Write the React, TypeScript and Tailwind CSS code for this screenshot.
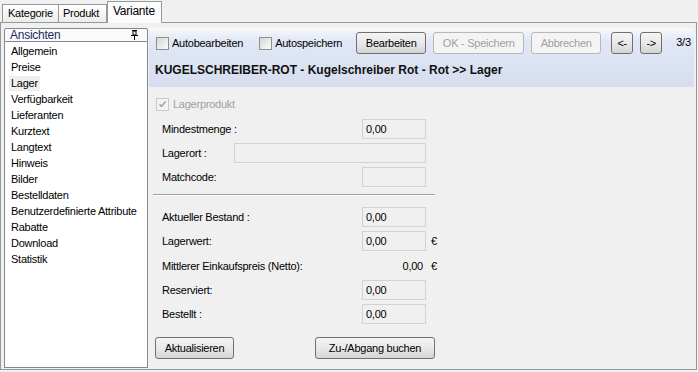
const views = [
  "Allgemein",
  "Preise",
  "Lager",
  "Verfügbarkeit",
  "Lieferanten",
  "Kurztext",
  "Langtext",
  "Hinweis",
  "Bilder",
  "Bestelldaten",
  "Benutzerdefinierte Attribute",
  "Rabatte",
  "Download",
  "Statistik",
];

function CheckBox({ disabled, checked }: { disabled?: boolean; checked?: boolean }) {
  return (
    <span
      className={
        "relative flex w-[13px] h-[13px] shrink-0 border " +
        (disabled
          ? "border-[#c9c9c9] bg-[#f4f4f4]"
          : "border-[#8f8f8f] bg-gradient-to-br from-[#d6d6d6] to-[#fcfcfc]")
      }
    >
      {checked && (
        <svg width="11" height="11" viewBox="0 0 11 11" className="absolute left-0 top-0">
          <path d="M2.5 5.2 L4.5 7.4 L8.6 2.6" fill="none" stroke="#a3a3a3" strokeWidth="1.6" />
        </svg>
      )}
    </span>
  );
}

function Btn({ label, w, disabled }: { label: string; w: string; disabled?: boolean }) {
  return (
    <div
      className={
        "h-[22px] flex items-center justify-center rounded-[3px] border shrink-0 " +
        w +
        " " +
        (disabled
          ? "border-[#b5b9bc] bg-[#f4f4f4] text-[#a0a0a0]"
          : "border-[#707070] bg-gradient-to-b from-[#f4f4f4] via-[#e9e9e9] to-[#d4d4d4] text-black")
      }
    >
      {label}
    </div>
  );
}

function Box({ value, w }: { value?: string; w: string }) {
  return (
    <div className={"h-[20px] shrink-0 border border-[#d2d2d2] bg-[#f0f0f0] pl-[3px] flex items-center " + w}>
      {value}
    </div>
  );
}

function Row({ label, value, euro }: { label: string; value?: string; euro?: boolean }) {
  return (
    <div className="flex items-center h-[20px]">
      <div className="w-[209px] pl-[9px]">{label}</div>
      <Box value={value} w="w-[64px]" />
      {euro && <span className="ml-[5px]">€</span>}
    </div>
  );
}

export default function App() {
  return (
    <div className="w-[698px] h-[372px] bg-[#f0f0f0] text-[11px] tracking-[-0.25px] text-black font-['Liberation_Sans',Arial,sans-serif] flex flex-col overflow-hidden">
      {/* tabs */}
      <div className="flex items-end h-[22px] pl-[2px] shrink-0">
        <div className="h-[18px] w-[57px] border border-b-0 border-[#919b9c] bg-gradient-to-b from-[#ffffff] to-[#ececeb] pl-[5px] flex items-center">
          Kategorie
        </div>
        <div className="h-[18px] w-[48px] border border-b-0 border-l-0 border-[#919b9c] bg-gradient-to-b from-[#ffffff] to-[#ececeb] pl-[4px] flex items-center">
          Produkt
        </div>
        <div className="relative z-10 -mb-px h-[22px] w-[55px] border border-b-0 border-[#919b9c] bg-[#fbfbfb] pl-[5px] pb-[3px] flex items-center text-[12px]">
          Variante
        </div>
      </div>

      {/* panel */}
      <div className="flex-1 mb-[2px] mr-[1px] border border-[#919b9c] bg-[#f0f0f0] flex gap-px pl-[3px] pr-[2px] pt-[5px] pb-[1px]">
        {/* left: Ansichten */}
        <div className="w-[144px] flex flex-col shrink-0">
          <div className="h-[14px] border border-[#828790] rounded-t-[2px] bg-[#fafafa] flex items-center justify-between pl-[5px] pr-[9px] text-[#1b2c5e] text-[12px]">
            <span>Ansichten</span>
            <svg width="7" height="10" viewBox="0 0 7 10">
              <rect x="1" y="0" width="5" height="1" fill="#000" />
              <rect x="2" y="1" width="3" height="4" fill="none" stroke="#000" strokeWidth="1" />
              <rect x="0" y="5" width="7" height="1" fill="#000" />
              <rect x="3" y="6" width="1" height="4" fill="#000" />
            </svg>
          </div>
          <div className="flex-1 border border-t-0 border-[#828790] bg-white pt-[1px]">
            {views.map((v) => (
              <div key={v} className="h-[16px] flex items-center pl-[4px]">
                <span className={"px-[2px] leading-[15px] " + (v === "Lager" ? "bg-[#efefef]" : "")}>{v}</span>
              </div>
            ))}
          </div>
        </div>

        {/* right */}
        <div className="flex-1 flex flex-col">
          <div className="h-[59px] bg-[linear-gradient(to_bottom,#f7f8fb_0%,#e1e7f5_22%,#d5ddef_100%)] flex flex-col shrink-0">
            <div className="flex items-center h-[22px] mt-[4px] pl-[7px]">
              <CheckBox />
              <span className="ml-[3px]">Autobearbeiten</span>
              <span className="ml-[16px]">
                <CheckBox />
              </span>
              <span className="ml-[3px]">Autospeichern</span>
              <span className="ml-[14px] flex gap-[7px]">
                <Btn label="Bearbeiten" w="w-[70px]" />
                <Btn label="OK - Speichern" w="w-[91px]" disabled />
                <Btn label="Abbrechen" w="w-[70px]" disabled />
              </span>
              <span className="ml-[10px] flex gap-[7px]">
                <Btn label="<-" w="w-[22px]" />
                <Btn label="->" w="w-[22px]" />
              </span>
              <span className="ml-[14px] -mt-[2px]">3/3</span>
            </div>
            <div className="pl-[6px] pt-[7px] font-bold text-[12px] tracking-normal text-[#111]">
              KUGELSCHREIBER-ROT - Kugelschreiber Rot - Rot &gt;&gt; Lager
            </div>
          </div>

          <div className="flex flex-col w-[300px] ml-[4px]">
            <div className="flex items-center h-[13px] mt-[11px] pl-[3px] text-[#a0a0a0]">
              <CheckBox disabled checked />
              <span className="ml-[4px]">Lagerprodukt</span>
            </div>
            <div className="flex flex-col gap-[4px] mt-[8px]">
              <Row label="Mindestmenge :" value="0,00" />
              <div className="flex items-center h-[20px]">
                <div className="w-[81px] pl-[9px]">Lagerort :</div>
                <Box w="w-[192px]" />
              </div>
              <Row label="Matchcode:" />
            </div>
            <div className="w-[282px] h-[2px] mt-[7px] border-t border-[#a0a0a0] border-b border-b-white" />
            <div className="flex flex-col gap-[4px] mt-[11px]">
              <Row label="Aktueller Bestand :" value="0,00" />
              <Row label="Lagerwert:" value="0,00" euro />
              <div className="flex items-center h-[20px] mt-[1px]">
                <div className="w-[209px] pl-[9px]">Mittlerer Einkaufspreis (Netto):</div>
                <div className="w-[61px] text-right">0,00</div>
                <span className="ml-[8px]">€</span>
              </div>
              <Row label="Reserviert:" value="0,00" />
              <Row label="Bestellt :" value="0,00" />
            </div>
            <div className="flex mt-[13px] ml-[2px]">
              <Btn label="Aktualisieren" w="w-[79px]" />
              <span className="ml-[81px]">
                <Btn label="Zu-/Abgang buchen" w="w-[120px]" />
              </span>
            </div>
          </div>
        </div>
      </div>
    </div>
  );
}
